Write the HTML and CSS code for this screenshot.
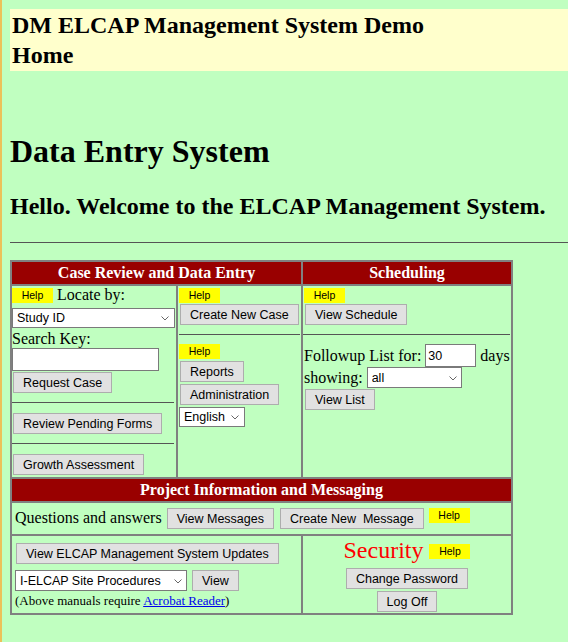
FILE: index.html
```html
<!DOCTYPE html>
<html lang="en">
<head>
<meta charset="utf-8">
<title>DM ELCAP Management System Demo</title>
<link rel="stylesheet" href="styles.css">
</head>
<body>
<div class="banner">
  <div>DM ELCAP Management System Demo</div>
  <div>Home</div>
</div>
<h1 class="title">Data Entry System</h1>
<h2 class="welcome">Hello. Welcome to the ELCAP Management System.</h2>
<hr class="rule">
<div class="board">
  <div class="head span2">Case Review and Data Entry</div>
  <div class="head">Scheduling</div>

  <div class="stack case">
    <div class="line"><span class="help">Help</span><span>Locate by:</span></div>
    <span class="sel sel-study"><select><option>Study ID</option></select><svg class="chev" width="8" height="5" viewBox="0 0 8 5"><polyline points="0.5,0.5 4,4 7.5,0.5" fill="none" stroke="#666" stroke-width="1"/></svg></span>
    <div class="label">Search Key:</div>
    <input class="field key" type="text">
    <button class="btn b-request">Request Case</button>
    <hr class="sep">
    <button class="btn">Review Pending Forms</button>
    <hr class="sep">
    <button class="btn">Growth Assessment</button>
  </div>

  <div class="stack tools">
    <div class="line"><span class="help">Help</span></div>
    <button class="btn">Create New Case</button>
    <hr class="sep">
    <div class="line"><span class="help">Help</span></div>
    <button class="btn b-reports">Reports</button>
    <button class="btn b-admin">Administration</button>
    <span class="sel sel-lang"><select><option>English</option></select><svg class="chev" width="8" height="5" viewBox="0 0 8 5"><polyline points="0.5,0.5 4,4 7.5,0.5" fill="none" stroke="#666" stroke-width="1"/></svg></span>
  </div>

  <div class="stack sched">
    <div class="line"><span class="help">Help</span></div>
    <button class="btn">View Schedule</button>
    <hr class="sep">
    <div class="frow"><span>Followup List for:</span><input class="field days" type="text" value="30"><span>days</span></div>
    <div class="srow"><span>showing:</span><span class="sel sel-show"><select><option>all</option></select><svg class="chev" width="8" height="5" viewBox="0 0 8 5"><polyline points="0.5,0.5 4,4 7.5,0.5" fill="none" stroke="#666" stroke-width="1"/></svg></span></div>
    <button class="btn b-list">View List</button>
  </div>

  <div class="head span3">Project Information and Messaging</div>

  <div class="qa span3">
    <span class="qa-text">Questions and answers</span>
    <button class="btn">View Messages</button>
    <button class="btn b-new">Create New&nbsp; Message</button>
    <span class="help">Help</span>
  </div>

  <div class="stack manuals span2">
    <button class="btn b-updates">View ELCAP Management System Updates</button>
    <div class="mrow">
      <span class="sel sel-proc"><select><option>I-ELCAP Site Procedures</option></select><svg class="chev" width="8" height="5" viewBox="0 0 8 5"><polyline points="0.5,0.5 4,4 7.5,0.5" fill="none" stroke="#666" stroke-width="1"/></svg></span>
      <button class="btn">View</button>
    </div>
    <div class="note">(Above manuals require <a href="#">Acrobat Reader</a>)</div>
  </div>

  <div class="security">
    <div class="secline"><span class="sectext">Security</span><span class="help">Help</span></div>
    <button class="btn b-pass">Change Password</button>
    <button class="btn b-logoff">Log Off</button>
  </div>
</div>
</body>
</html>
```

FILE: styles.css
```css
html {
  min-height: 100%;
  box-sizing: border-box;
  border-left: 2px solid #ecc15a;
  background: #c0ffc0;
}

body {
  margin: 9px 0 0 8px;
  font-family: "Liberation Serif", "Times New Roman", serif;
  font-size: 16px;
  color: #000;
}

.banner {
  background: #ffffcc;
  padding: 1px 2px;
  font-size: 24px;
  font-weight: bold;
  line-height: 30px;
}

.title {
  margin: 62px 0 0;
  font-size: 32px;
  line-height: 36px;
  font-weight: bold;
}

.welcome {
  margin: 23px 0 0;
  font-size: 24px;
  line-height: 28px;
  font-weight: bold;
}

.rule {
  margin: 22px 0 0;
  border: 0;
  border-top: 1px solid #555;
  height: 0;
}

.board {
  display: grid;
  grid-template-columns: 166px 125px 210px;
  width: max-content;
  margin-top: 17px;
  border: 1px solid #808080;
}

.board > div {
  box-sizing: border-box;
  border: 1px solid #808080;
}

.head {
  background: #990000;
  color: #fff;
  font-weight: bold;
  text-align: center;
  line-height: 22px;
  white-space: nowrap;
}

.span2 { grid-column: span 2; }
.span3 { grid-column: span 3; }

.stack {
  display: flex;
  flex-direction: column;
  align-items: flex-start;
}

.line {
  display: flex;
  align-items: center;
  gap: 4px;
  height: 18px;
  line-height: 18px;
}

.help {
  display: inline-block;
  width: 41px;
  height: 15px;
  background: #ffff00;
  font: 10.5px/15px "Liberation Sans", Arial, sans-serif;
  text-align: center;
  color: #000;
}

.btn {
  box-sizing: border-box;
  height: 21px;
  margin: 0;
  padding: 0 9px;
  font: 12.5px "Liberation Sans", Arial, sans-serif;
  color: #000;
  background: #e1e1e1;
  border: 1px solid #adadad;
  border-radius: 0;
  white-space: nowrap;
}

.sel {
  position: relative;
  display: inline-block;
}

.sel select {
  appearance: none;
  -webkit-appearance: none;
  box-sizing: border-box;
  display: block;
  margin: 0;
  height: 20px;
  padding: 0 0 0 4px;
  border: 1px solid #7a7a7a;
  border-radius: 0;
  background: #fff;
  color: #000;
  font: 12.5px "Liberation Sans", Arial, sans-serif;
}

.chev {
  position: absolute;
  right: 6px;
  top: 50%;
  margin-top: -2px;
}

.field {
  box-sizing: border-box;
  margin: 0;
  padding: 0 2px;
  border: 1px solid #7a7a7a;
  border-radius: 0;
  background: #fff;
  color: #000;
  font: 12.5px "Liberation Sans", Arial, sans-serif;
}

.sep {
  align-self: stretch;
  height: 0;
  border: 0;
  border-top: 1px solid #555;
}

/* left column: case review */
.case { padding-bottom: 2px; }
.case .sel-study { margin-top: 4px; }
.case .sel-study select { width: 163px; }
.case .label { margin-top: 2px; line-height: 18px; }
.case .key { width: 147px; height: 23px; }
.case .btn { margin-left: 1px; }
.case .b-request { margin-top: 1px; }
.case .sep { margin: 9px 2px 10px 0; }

/* middle column: tools */
.tools .line { margin-left: 1px; }
.tools .btn { margin-left: 2px; }
.tools .sep { margin: 9px 1px 7px 1px; }
.tools .b-reports { margin-top: 1px; }
.tools .b-admin { margin-top: 2px; }
.tools .sel-lang { margin: 2px 0 0 1px; }
.tools .sel-lang select { width: 66px; padding-left: 4px; }

/* right column: scheduling */
.sched .line { margin-left: 1px; }
.sched .btn { margin-left: 2px; }
.sched .sep { margin: 9px 1px 9px 0; }

.frow {
  display: flex;
  align-items: center;
  gap: 4px;
  height: 23px;
  margin-left: 1px;
  white-space: nowrap;
  line-height: 18px;
}

.frow .days { width: 51px; height: 23px; }

.srow {
  display: flex;
  align-items: center;
  gap: 4px;
  height: 21px;
  margin-left: 1px;
  line-height: 18px;
}

.sel-show select { width: 95px; height: 21px; }
.sel-show .chev { right: 5px; }

.sched .b-list { margin-top: 1px; }

/* messaging row */
.qa {
  display: flex;
  align-items: flex-start;
  gap: 5px;
  padding: 5px 3px 5px;
  line-height: 18px;
}

.qa-text { white-space: nowrap; margin-top: 1px; }
.qa .b-new { margin-left: 1px; }

/* manuals */
.manuals { padding: 7px 0 5px 3px; }
.manuals .b-updates { margin-left: 1px; }

.mrow {
  display: flex;
  align-items: center;
  gap: 5px;
  margin-top: 6px;
}

.sel-proc select { width: 172px; height: 21px; }
.sel-proc .chev { right: 5px; }

.note {
  margin-top: 2px;
  font-size: 13px;
  line-height: 15px;
}

.note a { color: #0000ee; }

/* security */
.security {
  display: flex;
  flex-direction: column;
  align-items: center;
  padding-top: 1px;
}

.secline {
  display: flex;
  align-items: flex-end;
  gap: 6px;
  height: 27px;
}

.sectext {
  font-size: 24px;
  line-height: 27px;
  color: #ff0000;
}

.secline .help { margin-bottom: 5px; }

.security .b-pass { margin-top: 4px; }
.security .b-logoff { margin-top: 2px; }
```
